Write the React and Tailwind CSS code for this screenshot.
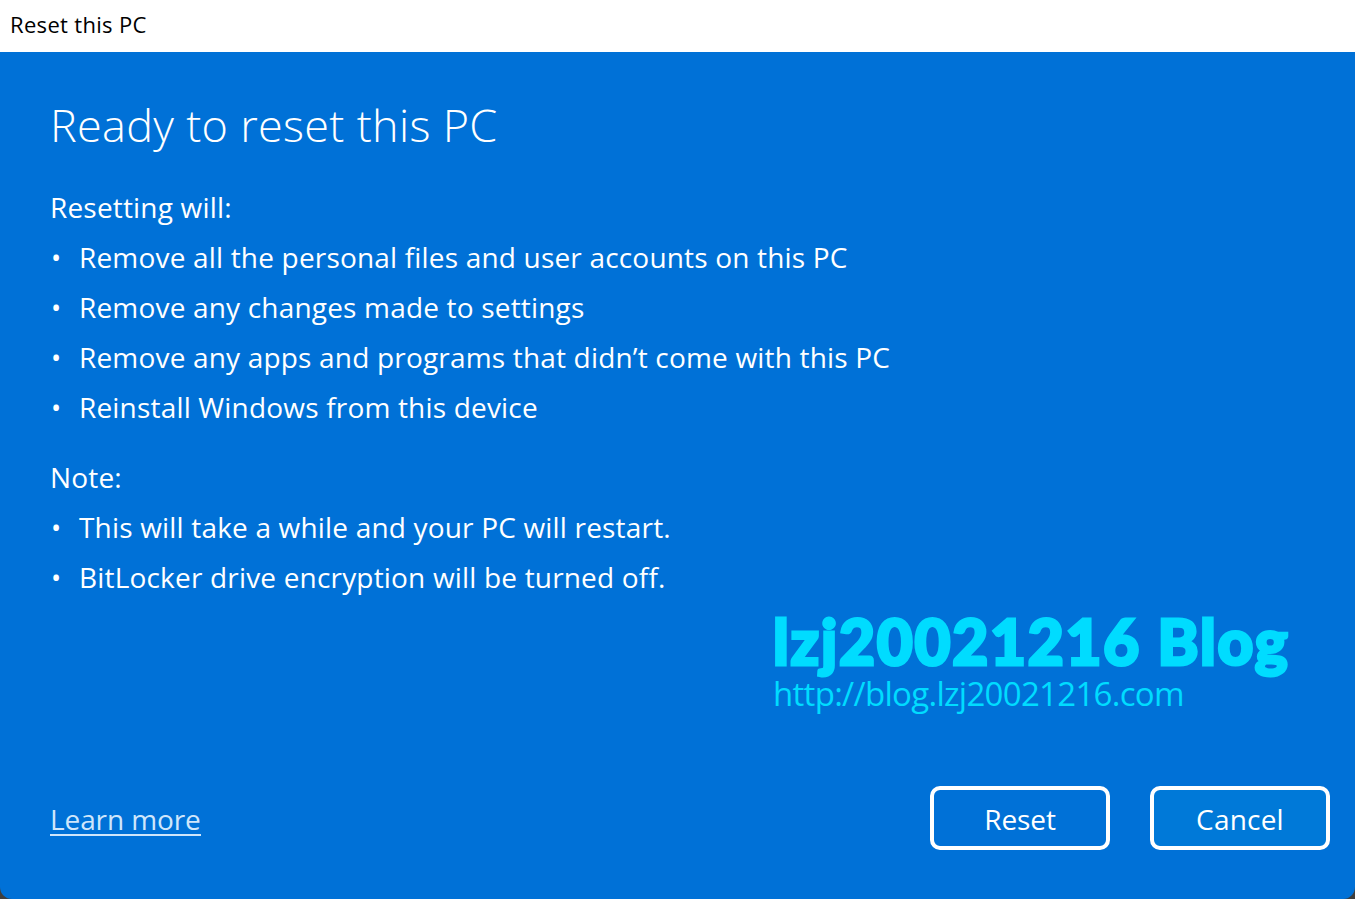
function Bullet({ children }) {
  return (
    <li className="flex h-[50px] items-center">
      <span className="w-[29px] pl-[1px] text-[27px] leading-none">•</span>
      <span className="whitespace-nowrap">{children}</span>
    </li>
  );
}

export default function App() {
  return (
    <div className="flex h-[899px] w-[1355px] flex-col overflow-hidden bg-[#3f3f3f] font-['Open_Sans',sans-serif]">
      <div className="flex h-[52px] shrink-0 items-center bg-white pb-[3px] pl-[10px] text-[22px] tracking-[0.32px] text-black">
        Reset this PC
      </div>
      <div className="relative flex min-h-0 flex-1 flex-col rounded-b-[12px] bg-[#0071d7] pl-[50px] pr-[25px] text-white">
        <h1 className="mt-[41px] h-[64px] text-[45px] leading-[64px] font-light tracking-[0.3px]">
          Ready to reset this PC
        </h1>
        <div className="mt-[25px] text-[28px] tracking-[0.18px]">
          <p className="flex h-[50px] items-center">Resetting will:</p>
          <ul>
            <Bullet>Remove all the personal files and user accounts on this PC</Bullet>
            <Bullet>Remove any changes made to settings</Bullet>
            <Bullet>Remove any apps and programs that didn’t come with this PC</Bullet>
            <Bullet>Reinstall Windows from this device</Bullet>
          </ul>
          <p className="mt-[20px] flex h-[50px] items-center">Note:</p>
          <ul>
            <Bullet>This will take a while and your PC will restart.</Bullet>
            <Bullet>BitLocker drive encryption will be turned off.</Bullet>
          </ul>
        </div>
        <div className="absolute left-[773px] top-[558px] text-[#00dcff]">
          <div className="h-[62px] text-[62px] leading-[62px] font-black tracking-[1.8px] whitespace-nowrap font-['Lato',sans-serif] [-webkit-text-stroke:3px_#00dcff]">
            lzj20021216 Blog
          </div>
          <div className="h-[44px] text-[33px] leading-[44px] tracking-[-0.7px] whitespace-nowrap">
            http://blog.lzj20021216.com
          </div>
        </div>
        <div className="mt-auto mb-[49px] flex items-center justify-between">
          <a className="mt-[4px] border-b-2 border-[#cfe6fb] text-[28px] leading-[29px] tracking-[-0.1px] text-[#cfe6fb]">Learn more</a>
          <div className="flex gap-[40px]">
            <button className="h-[64px] w-[180px] rounded-[10px] border-4 border-white pt-[1px] text-[28px] tracking-[-0.1px]">Reset</button>
            <button className="h-[64px] w-[180px] rounded-[10px] border-4 border-white bg-[#0079d8] pt-[1px] text-[28px] tracking-[0.2px]">Cancel</button>
          </div>
        </div>
      </div>
    </div>
  );
}
